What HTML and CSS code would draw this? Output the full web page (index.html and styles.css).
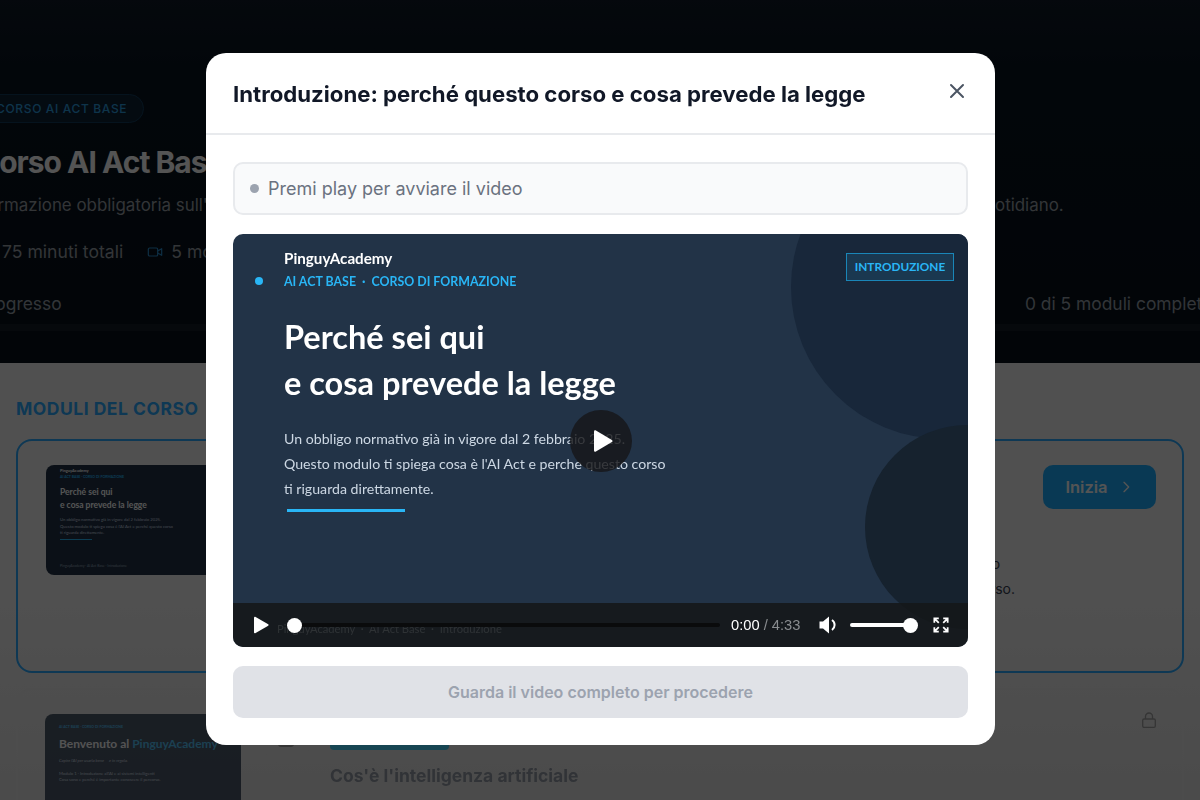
FILE: index.html
```html
<!DOCTYPE html>
<html lang="it">
<head>
    <meta charset="UTF-8">
    <meta name="viewport" content="width=device-width, initial-scale=1.0">
    <title>Corso AI Act Base | PinguyAcademy</title>
    <link rel="stylesheet" href="styles.css">
</head>
<body>
    <!-- Course page behind the modal -->
    <div class="page">
        <header class="hero">
            <div class="hero-inner">
                <span class="hero-pill">CORSO AI ACT BASE</span>
                <h1>Corso AI Act Base</h1>
                <p class="hero-desc">Formazione obbligatoria sull'intelligenza artificiale per i dipendenti: cosa prevede la legge, i limiti e come usare l'AI nel lavoro quotidiano.</p>
                <div class="hero-meta">
                    <span class="meta-item">
                        <svg width="16" height="16" viewBox="0 0 24 24" fill="none" stroke="#2a8ccc" stroke-width="1.800"><circle cx="12" cy="12" r="10"/><path d="M12 6v6l4 2"/></svg>
                        75 minuti totali
                    </span>
                    <span class="meta-item">
                        <svg width="16" height="16" viewBox="0 0 24 24" fill="none" stroke="#2a8ccc" stroke-width="1.800" stroke-linejoin="round"><rect x="2" y="6" width="14" height="12" rx="2"/><path d="M16 10.500l6-3.500v10l-6-3.500"/></svg>
                        5 moduli
                    </span>
                </div>
                <div class="hero-progress-labels">
                    <span>Progresso</span>
                    <span>0 di 5 moduli completati</span>
                </div>
                <div class="hero-bar"></div>
            </div>
        </header>

        <main class="modules">
            <h2>MODULI DEL CORSO</h2>

            <div class="module module-active">
                <div class="thumb">
                    <div class="thumb-brand">PinguyAcademy</div>
                    <div class="thumb-kicker">AI ACT BASE · CORSO DI FORMAZIONE</div>
                    <div class="thumb-title">Perché sei qui<br>e cosa prevede la legge</div>
                    <div class="thumb-text">Un obbligo normativo già in vigore dal 2 febbraio 2025.<br>Questo modulo ti spiega cosa è l'AI Act e perché questo corso<br>ti riguarda direttamente.</div>
                    <div class="thumb-rule"></div>
                    <div class="thumb-foot">PinguyAcademy · AI Act Base · Introduzione</div>
                </div>
                <div class="module-circle"></div>
                <div class="module-body">
                    <span class="module-tag">INTRODUZIONE</span>
                    <h3>Introduzione: perché questo corso</h3>
                    <p>Scopri che cosa prevede il regolamento europeo sull'intelligenza artificiale e perché riguarda davvero<br>il tuo lavoro di ogni giorno, con esempi pratici e indicazioni utili per seguire con attenzione tutto il corso.</p>
                </div>
                <button class="start-btn">Inizia
                    <svg width="16" height="16" viewBox="0 0 24 24" fill="none" stroke="currentColor" stroke-width="2" stroke-linecap="round" stroke-linejoin="round"><path d="M9 5l7 7-7 7"/></svg>
                </button>
            </div>

            <div class="module module-locked">
                <div class="thumb thumb-alt">
                    <div class="thumb-kicker">AI ACT BASE · CORSO DI FORMAZIONE</div>
                    <div class="thumb-title-big">Benvenuto al <span>PinguyAcademy</span></div>
                    <div class="thumb-text"><em>Capire l'AI per usarla bene — e in regola.</em></div>
                    <div class="thumb-text">Modulo 1 · Introduzione all'AI e ai sistemi intelligenti<br>Cosa sono e perché è importante conoscere il percorso.</div>
                </div>
                <div class="module-circle">
                    <svg width="18" height="18" viewBox="0 0 18 18" fill="none" stroke="#8d8d8d" stroke-width="2"><rect x="2" y="2" width="14" height="14" rx="2"/></svg>
                </div>
                <div class="module-body">
                    <span class="module-tag">MODULO 1</span>
                    <h3>Cos'è l'intelligenza artificiale</h3>
                </div>
                <svg class="lock" width="14" height="16" viewBox="0 0 14 16" fill="none" stroke="currentColor" stroke-width="1.300"><rect x="0.700" y="7" width="12.600" height="8.300" rx="1.300"/><path d="M3.500 7V4.500a3.500 3.500 0 0 1 7 0V7"/></svg>
            </div>
        </main>
    </div>

    <!-- Video modal -->
    <div class="overlay">
        <div class="modal">
            <div class="modal-header">
                <h2>Introduzione: perché questo corso e cosa prevede la legge</h2>
                <svg class="modal-close" width="24" height="24" viewBox="0 0 24 24" fill="none" stroke="currentColor" stroke-width="2" stroke-linecap="round"><path d="M18 6L6 18M6 6l12 12"/></svg>
            </div>
            <div class="modal-body">
                <div class="status"><span class="status-dot"></span>Premi play per avviare il video</div>

                <div class="video">
                    <div class="circle circle-one"></div>
                    <div class="circle circle-two"></div>
                    <span class="slide-badge">INTRODUZIONE</span>
                    <div class="slide">
                        <div class="slide-brand">PinguyAcademy</div>
                        <div class="slide-kicker"><span class="slide-dot"></span>AI ACT BASE &nbsp;·&nbsp; CORSO DI FORMAZIONE</div>
                        <div class="slide-title">Perché sei qui<br>e cosa prevede la legge</div>
                        <div class="slide-text">Un obbligo normativo già in vigore dal 2 febbraio 2025.<br>Questo modulo ti spiega cosa è l'AI Act e perche questo corso<br>ti riguarda direttamente.</div>
                        <div class="slide-rule"></div>
                        <div class="slide-foot">PinguyAcademy &nbsp;·&nbsp; AI Act Base &nbsp;·&nbsp; Introduzione</div>
                    </div>

                    <div class="big-play">
                        <svg width="24" height="26" viewBox="0 0 24 26"><path d="M3 3.500v19c0 1 1 1.600 1.900 1.100l16-9.500c.8-.5.8-1.700 0-2.200l-16-9.500C4 1.900 3 2.500 3 3.500z" fill="#fff"/></svg>
                    </div>

                    <div class="controls">
                        <svg class="ctrl-play" width="16" height="18" viewBox="0 0 16 18"><path d="M1 1.500v15c0 .6.600 1 1.200.700l13-7.500c.5-.3.5-1.100 0-1.400l-13-7.500C1.600.5 1 .9 1 1.500z" fill="#fff"/></svg>
                        <div class="seek"><span class="knob"></span></div>
                        <span class="time">0:00 <span class="time-total">/ 4:33</span></span>
                        <svg class="ctrl-vol" width="20" height="18" viewBox="0 0 20 18"><path d="M0.500 5.500h3.500l6-5v17l-6-5H0.500z" fill="#fff"/><path d="M13 4c1.800 1.300 2.600 3 2.600 5s-.8 3.700-2.600 5" fill="none" stroke="#fff" stroke-width="2"/></svg>
                        <div class="volume"><span class="knob"></span></div>
                        <svg class="ctrl-full" width="16" height="16" viewBox="0 0 18 18" fill="none" stroke="#fff" stroke-width="2"><path d="M1.500 6.500V1.500h5M1.500 1.500l5 5M16.500 6.500V1.500h-5M16.500 1.500l-5 5M1.500 11.500v5h5M1.500 16.500l5-5M16.500 11.500v5h-5M16.500 16.500l-5-5"/></svg>
                    </div>
                </div>

                <button class="proceed" disabled>Guarda il video completo per procedere</button>
            </div>
        </div>
    </div>
</body>
</html>
```

FILE: styles.css
```css
body {
    margin: 0;
    font-family: 'Inter', 'Liberation Sans', sans-serif;
    background-color: #f3f3f3;
    overflow: hidden;
}

.page {
    height: 800px;
    overflow: hidden;
}

/* Hero */
.hero {
    height: 363px;
    box-sizing: border-box;
    padding-top: 94px;
    background: linear-gradient(#101a28, #081420 20%, #071019);
    color: #fff;
    overflow: hidden;
}

.hero-inner {
    width: 1244px;
    margin-left: -22px;
}

.hero-pill {
    display: inline-block;
    box-sizing: border-box;
    height: 29px;
    line-height: 27px;
    padding: 0 16px 0 17px;
    font-size: 12px;
    font-weight: 500;
    letter-spacing: 0.650px;
    color: #2d9fe0;
    border: 1px solid #123c5c;
    border-radius: 15px;
    background-color: #0d2236;
}

.hero h1 {
    margin: 18px 0 0;
    font-size: 30px;
    line-height: 42px;
    font-weight: 700;
    letter-spacing: -1px;
}

.hero-desc {
    margin: 10px 0 0;
    font-size: 16.900px;
    line-height: 24px;
    color: #9aa0a8;
    white-space: nowrap;
}

.hero-meta {
    display: flex;
    gap: 24px;
    margin-top: 23px;
    font-size: 17.600px;
    line-height: 24px;
    color: #9aa0a8;
}

.meta-item {
    display: flex;
    align-items: center;
    gap: 8px;
}

.hero-progress-labels {
    display: flex;
    justify-content: space-between;
    margin-top: 28px;
    font-size: 17.400px;
    line-height: 24px;
    color: #98a0aa;
}

.hero-bar {
    height: 7px;
    margin-top: 8px;
    background-color: #141c26;
    border-radius: 4px;
}

/* Modules */
.modules {
    padding: 34px 16px 0;
    background: linear-gradient(#f3f3f3 50%, #e2e2e2);
    height: 437px;
    box-sizing: border-box;
}

.modules h2 {
    margin: 0 0 18px;
    font-size: 17.500px;
    line-height: 24px;
    font-weight: 700;
    letter-spacing: 0.5px;
    color: #2dabff;
}

.module {
    display: flex;
    gap: 20px;
    box-sizing: border-box;
    padding: 24px 26px 24px 28px;
    border-radius: 16px;
}

.module-active {
    height: 234px;
    border: 2px solid #2dabff;
}

.module-locked {
    margin-top: 15px;
    padding-top: 24px;
    padding-left: 27px;
    border: 2px solid #e8e8e8;
    opacity: 0.78;
}

.thumb {
    flex: none;
    width: 196px;
    height: 110px;
    box-sizing: border-box;
    padding: 3px 14px;
    background-color: #223347;
    border-radius: 8px;
    color: #fff;
    overflow: hidden;
}

.thumb-brand {
    font-family: 'Lato', sans-serif;
    font-weight: 700;
    font-size: 4px;
    line-height: 6px;
}

.thumb-kicker {
    font-family: 'Lato', sans-serif;
    font-size: 3.500px;
    line-height: 6px;
    font-weight: 700;
    color: #29b6f6;
}

.thumb-title {
    margin-top: 6px;
    font-family: 'Lato', sans-serif;
    font-size: 8.500px;
    line-height: 12.500px;
    font-weight: 700;
}

.thumb-text {
    margin-top: 6px;
    font-family: 'Lato', sans-serif;
    font-size: 4.200px;
    line-height: 6.500px;
    color: #cbd5e1;
}

.thumb-rule {
    width: 32px;
    height: 1px;
    margin-top: 2px;
    background-color: #29b6f6;
}

.thumb-foot {
    margin-top: 24px;
    font-family: 'Lato', sans-serif;
    font-size: 3.500px;
    color: #94a3b8;
}

.thumb-alt {
    padding-top: 10px;
}

.thumb-title-big {
    margin-top: 6px;
    font-family: 'Lato', sans-serif;
    font-size: 12px;
    line-height: 16px;
    font-weight: 700;
    white-space: nowrap;
}

.thumb-title-big span {
    color: #29b6f6;
}

.module-circle {
    flex: none;
    display: flex;
    align-items: center;
    justify-content: center;
    width: 50px;
    height: 50px;
    border-radius: 50%;
    background-color: #e6e6e6;
}

.module-body {
    flex: 1;
    margin-left: -2px;
}

.module-tag {
    display: block;
    width: 119px;
    height: 24px;
    line-height: 24px;
    text-align: center;
    font-size: 11px;
    font-weight: 700;
    color: #fff;
    background-color: #18d0ff;
    border-radius: 4px;
}

.module-locked .module-body {
    margin-left: -1px;
}

.module-locked .module-tag {
    margin-top: 12px;
}

.module-body h3 {
    margin: 12px 0 0;
    font-size: 17.500px;
    line-height: 26px;
    font-weight: 700;
    color: #7e8794;
}

.module-locked .module-body h3 {
    margin-top: 13px;
}

.module-body p {
    margin: 24px 0 0;
    font-size: 14px;
    line-height: 25px;
    color: #374151;
    white-space: nowrap;
    width: 680px;
}

.module-active .module-body h3 {
    color: #111827;
}

.start-btn {
    flex: none;
    width: 113px;
    height: 44px;
    display: flex;
    align-items: center;
    justify-content: center;
    gap: 10px;
    font-family: inherit;
    font-size: 16.500px;
    font-weight: 600;
    color: #fff;
    background-color: #1eaeff;
    border: none;
    border-radius: 10px;
}

.lock {
    flex: none;
    margin-top: -2px;
    color: #8d8d8d;
}

/* Modal */
.overlay {
    position: fixed;
    top: 0;
    left: 0;
    right: 0;
    bottom: 0;
    display: flex;
    align-items: center;
    justify-content: center;
    padding: 0 0 2px 1px;
    box-sizing: border-box;
    background-color: rgba(0, 0, 0, 0.67);
}

.modal {
    width: 789px;
    background-color: #fff;
    border-radius: 20px;
    overflow: hidden;
}

.modal-header {
    display: flex;
    align-items: center;
    justify-content: space-between;
    height: 82px;
    box-sizing: border-box;
    padding: 0 26px 0 27px;
    border-bottom: 2px solid #e8eaed;
}

.modal-header h2 {
    margin: 0;
    font-size: 22.200px;
    font-weight: 700;
    color: #111827;
    white-space: nowrap;
}

.modal-close {
    color: #4b5563;
    margin-top: -4px;
}

.modal-body {
    display: flex;
    flex-direction: column;
    gap: 19px;
    padding: 27px;
}

.status {
    display: flex;
    align-items: center;
    gap: 9px;
    height: 53px;
    box-sizing: border-box;
    padding-left: 15px;
    font-size: 18px;
    color: #6b7280;
    background-color: #f9fafb;
    border: 2px solid #e8eaed;
    border-radius: 10px;
}

.status-dot {
    width: 9px;
    height: 9px;
    border-radius: 50%;
    background-color: #9ca3af;
}

/* Video slide */
.video {
    position: relative;
    height: 413px;
    background-color: #223347;
    border-radius: 10px;
    overflow: hidden;
}

.circle {
    position: absolute;
    border-radius: 50%;
}

.circle-one {
    left: 558px;
    top: -99px;
    width: 304px;
    height: 304px;
    background-color: #18273a;
}

.circle-two {
    left: 632px;
    top: 191px;
    width: 204px;
    height: 204px;
    background-color: #16222e;
}

.slide-badge {
    position: absolute;
    top: 19px;
    right: 14px;
    width: 108px;
    height: 28px;
    box-sizing: border-box;
    line-height: 26px;
    text-align: center;
    font-family: 'Lato', sans-serif;
    font-size: 11.800px;
    font-weight: 700;
    color: #29b6f6;
    background-color: rgba(41, 182, 246, 0.12);
    border: 1px solid #1a86b8;
}

.slide {
    position: relative;
    padding: 13px 0 0 51px;
    font-family: 'Lato', sans-serif;
    color: #fff;
}

.slide-brand {
    font-size: 15.200px;
    line-height: 22px;
    font-weight: 700;
}

.slide-kicker {
    position: relative;
    margin-top: 2px;
    font-size: 12.400px;
    line-height: 22px;
    font-weight: 700;
    color: #29b6f6;
}

.slide-dot {
    position: absolute;
    left: -29px;
    top: 6px;
    width: 8px;
    height: 8px;
    border-radius: 50%;
    background-color: #29b6f6;
}

.slide-title {
    margin-top: 21px;
    font-size: 32.500px;
    line-height: 46px;
    font-weight: 700;
}

.slide-text {
    margin-top: 20px;
    font-size: 14.150px;
    line-height: 25px;
    color: #cdd8e4;
}

.slide-rule {
    width: 118px;
    height: 3px;
    margin: 8px 0 0 3px;
    background-color: #29b6f6;
}

.slide-foot {
    margin-top: 109px;
    margin-left: -7px;
    font-size: 11.200px;
    line-height: 16px;
    color: #c0ccd8;
}

.big-play {
    position: absolute;
    left: 337px;
    top: 176px;
    width: 62px;
    height: 62px;
    padding-left: 4px;
    box-sizing: border-box;
    display: flex;
    align-items: center;
    justify-content: center;
    border-radius: 50%;
    background-color: rgba(22, 22, 24, 0.82);
}

/* Player controls */
.controls {
    position: absolute;
    left: 0;
    right: 0;
    bottom: 0;
    height: 44px;
    display: flex;
    align-items: center;
    padding-left: 20px;
    background-color: rgba(20, 22, 24, 0.85);
    font-family: 'Liberation Sans', sans-serif;
    color: #fff;
}

.ctrl-play {
    flex: none;
    margin-right: 25px;
}

.seek {
    position: relative;
    flex: none;
    width: 426px;
    height: 4px;
    background-color: #0a0b0c;
    border-radius: 2px;
}

.seek .knob {
    left: -7px;
}

.knob {
    position: absolute;
    top: -5.500px;
    width: 15px;
    height: 15px;
    border-radius: 50%;
    background-color: #fff;
}

.time {
    flex: none;
    width: 88px;
    margin-left: 11px;
    font-size: 14.700px;
}

.time-total {
    color: #8a8d90;
}

.ctrl-vol {
    flex: none;
    margin-right: 11px;
}

.volume {
    position: relative;
    flex: none;
    width: 60px;
    height: 4px;
    background-color: #fff;
    border-radius: 2px;
}

.volume .knob {
    right: -8px;
}

.ctrl-full {
    flex: none;
    margin-left: 23px;
}

.proceed {
    height: 52px;
    font-family: inherit;
    font-size: 16px;
    font-weight: 600;
    color: #9ca3af;
    background-color: #e0e2e7;
    border: none;
    border-radius: 10px;
}
```
